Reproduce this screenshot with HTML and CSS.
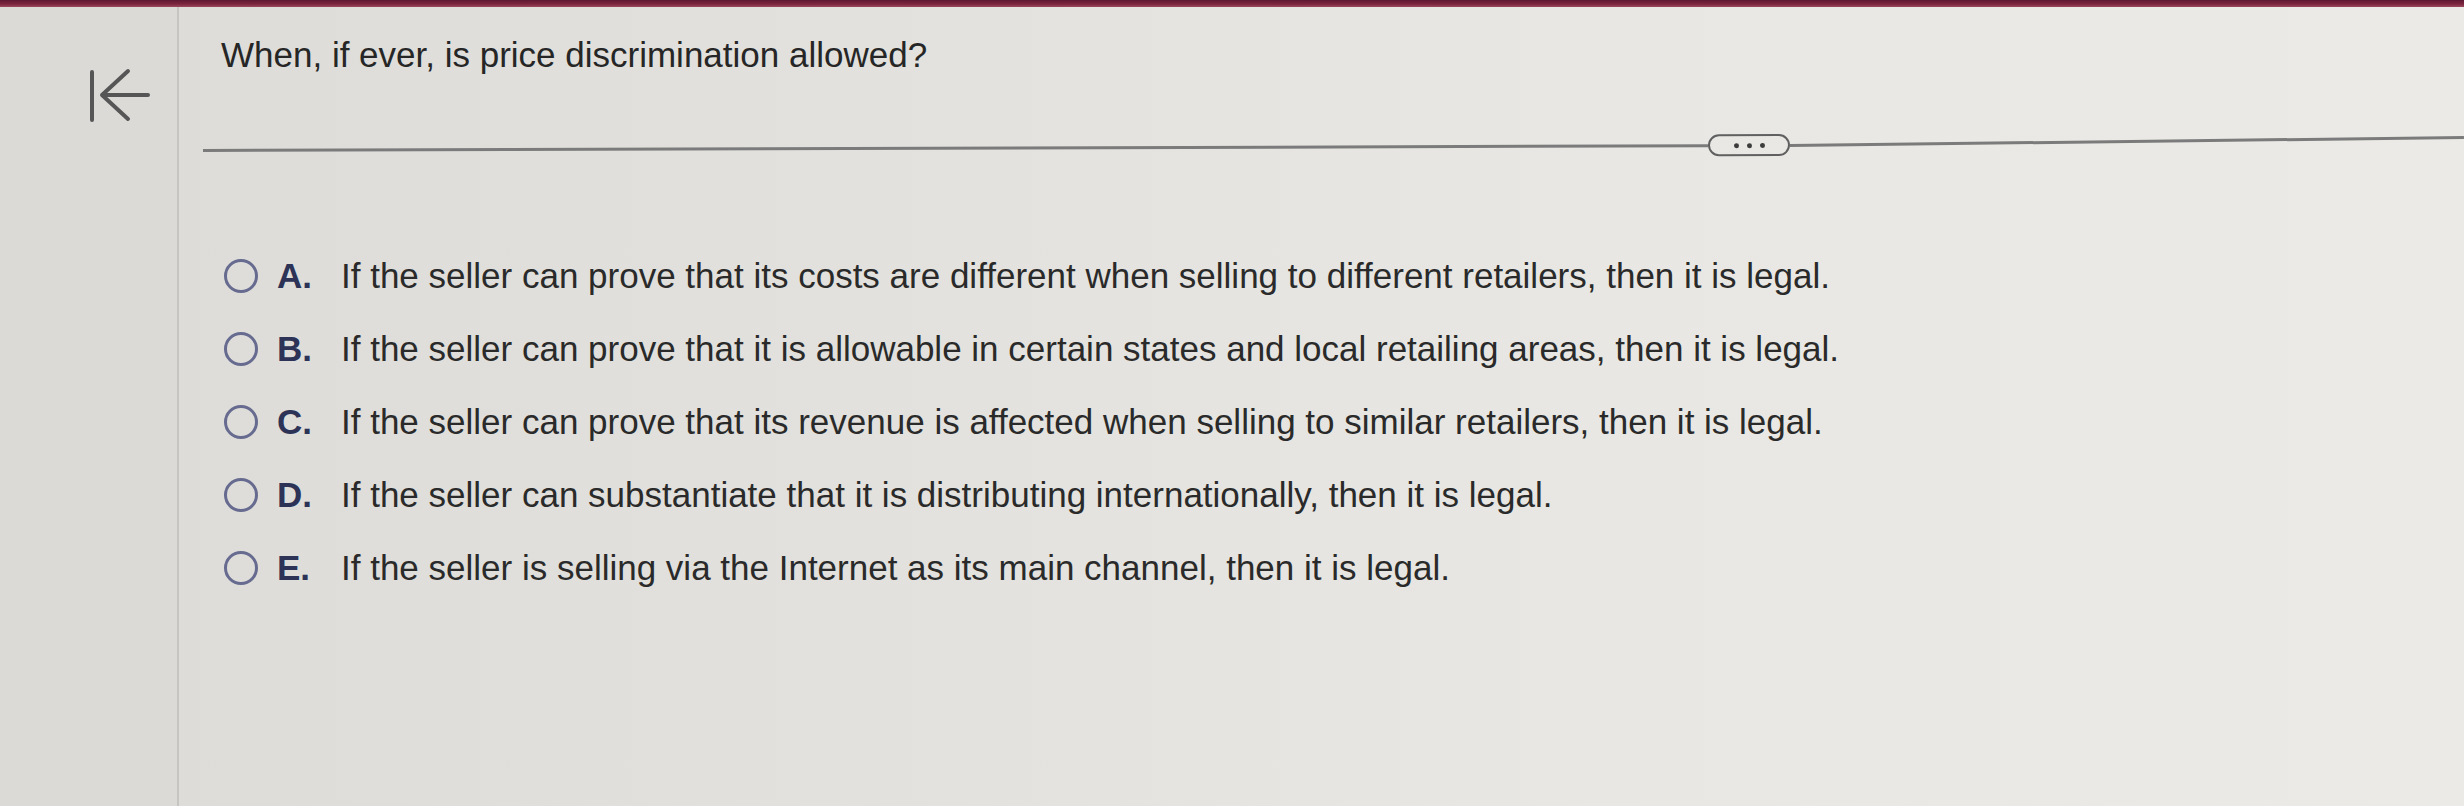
FILE: index.html
```html
<!DOCTYPE html>
<html lang="en">
<head>
<meta charset="utf-8">
<title>Question</title>
<link rel="stylesheet" href="styles.css">
</head>
<body>
<div class="topbar"></div>
<div class="main">
  <aside class="sidebar">
    <svg class="back" width="64" height="56" viewBox="0 0 64 56" aria-label="Back">
      <path d="M4 4 V52" />
      <path d="M14 27 H60 M40 3 L14 27 L40 51" />
    </svg>
  </aside>
  <section class="content">
    <h1 class="question">When, if ever, is price discrimination allowed?</h1>
    <div class="rule">
      <div class="line"></div>
      <div class="pill"><span></span><span></span><span></span></div>
      <div class="line"></div>
    </div>
    <ul class="options">
      <li><span class="radio"></span><span class="letter">A.</span><span class="text">If the seller can prove that its costs are different when selling to different retailers, then it is legal.</span></li>
      <li><span class="radio"></span><span class="letter">B.</span><span class="text">If the seller can prove that it is allowable in certain states and local retailing areas, then it is legal.</span></li>
      <li><span class="radio"></span><span class="letter">C.</span><span class="text">If the seller can prove that its revenue is affected when selling to similar retailers, then it is legal.</span></li>
      <li><span class="radio"></span><span class="letter">D.</span><span class="text">If the seller can substantiate that it is distributing internationally, then it is legal.</span></li>
      <li><span class="radio"></span><span class="letter">E.</span><span class="text">If the seller is selling via the Internet as its main channel, then it is legal.</span></li>
    </ul>
  </section>
</div>
</body>
</html>
```

FILE: styles.css
```css
html, body {
  margin: 0;
  padding: 0;
}
body {
  width: 2464px;
  height: 806px;
  overflow: hidden;
  font-family: "Liberation Sans", Arial, sans-serif;
  color: #2a2a2a;
  background: linear-gradient(90deg, #dcdbd8 0%, #e2e1dd 35%, #e8e7e3 65%, #ebeae6 100%);
}
.topbar {
  height: 7px;
  background: linear-gradient(180deg, #5e1830 0%, #7e2640 60%, #9a4a5e 100%);
}
.main {
  display: flex;
  height: 799px;
}
.sidebar {
  width: 179px;
  flex: 0 0 179px;
  border-right: 2px solid #c6c5c1;
  background: #dbdad7;
  box-sizing: border-box;
  padding: 61px 0 0 88px;
}
.back {
  display: block;
  fill: none;
  stroke: #565656;
  stroke-width: 4;
  stroke-linecap: round;
  stroke-linejoin: round;
}
.content {
  flex: 1;
  padding-left: 42px;
  box-sizing: border-box;
}
.question {
  margin: 28px 0 0 0;
  font-size: 35px;
  line-height: 40px;
  font-weight: normal;
  color: #262626;
}
.rule {
  display: flex;
  align-items: center;
  margin: 64px 0 0 -18px;
  transform: rotate(-0.18deg);
  transform-origin: 0 50%;
}
.line {
  height: 3px;
  background: #7b7b7b;
  flex: 1;
}
.line:first-child {
  flex: 0 0 1505px;
}
.line:last-child {
  transform: rotate(-0.5deg);
  transform-origin: 0 50%;
}
.pill {
  width: 82px;
  height: 22px;
  box-sizing: border-box;
  border: 2.5px solid #606060;
  border-radius: 11px;
  display: flex;
  align-items: center;
  justify-content: center;
  gap: 8px;
}
.pill span {
  width: 5px;
  height: 5px;
  border-radius: 50%;
  background: #3c3c3c;
}
.options {
  list-style: none;
  margin: 98px 0 0 0;
  padding: 0 0 0 3px;
  display: flex;
  flex-direction: column;
  gap: 39px;
}
.options li {
  display: flex;
  align-items: center;
  height: 34px;
  font-size: 35px;
}
.radio {
  width: 34px;
  height: 34px;
  box-sizing: border-box;
  border: 3.5px solid #666b8f;
  border-radius: 50%;
  flex: 0 0 34px;
}
.letter {
  font-weight: bold;
  color: #2c3356;
  width: 64px;
  margin-left: 19px;
}
.text {
  color: #2a2a2a;
  white-space: nowrap;
}
```
